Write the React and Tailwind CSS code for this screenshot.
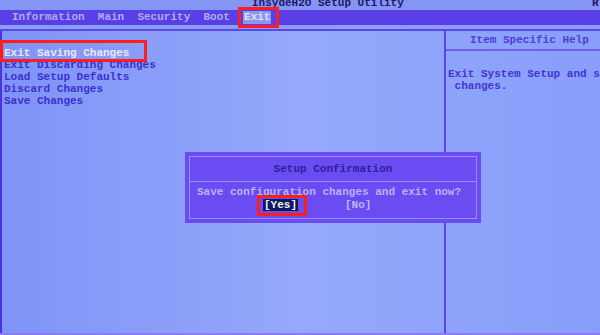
export default function App() {
  const mono = { fontFamily: '"Liberation Mono", "DejaVu Sans Mono", monospace' };
  return (
    <div
      className="relative w-[600px] h-[335px] overflow-hidden bg-gradient-to-r from-[#7f93f6] via-[#95a8fc] to-[#889efa] text-[11px] font-bold"
      style={mono}
    >
      {/* title strip */}
      <div className="h-[10px] bg-[#8595f4] relative overflow-hidden">
        <div className="absolute left-[252px] top-[-3px] leading-[12px] text-[#20186a] whitespace-pre">InsydeH2O Setup Utility</div>
        <div className="absolute left-[592px] top-[-3px] leading-[12px] text-[#20186a]">R</div>
      </div>
      {/* menu bar */}
      <div className="h-[15px] bg-[#5a3ee6] flex items-center">
        <div className="pl-[12px] leading-[15px] text-[#a6b0f2] whitespace-pre">Information  Main  Security  Boot  </div>
        <div className="leading-[13px] bg-[#8a98f4] text-[#dfe3ff] px-[1px] whitespace-pre">Exit</div>
      </div>
      {/* strip */}
      <div className="h-[4px] bg-[#8a9ef8]" />
      <div className="h-[2px] bg-[#5d48e4]" />
      {/* body */}
      <div className="flex h-[304px]">
        <div className="w-[444px] shrink-0 border-l-2 border-[#4a34e0] pl-[2px] pt-[16px] leading-[12px] text-[#3b2fd2] whitespace-pre">
          <div className="text-[#e6e9ff]">Exit Saving Changes</div>
          <div>Exit Discarding Changes</div>
          <div>Load Setup Defaults</div>
          <div>Discard Changes</div>
          <div>Save Changes</div>
        </div>
        <div className="w-[2px] shrink-0 bg-[#5a44e2]" />
        <div className="flex-1 min-w-0 overflow-hidden flex flex-col">
          <div className="h-[20px] flex items-center pl-[24px] text-[#4a3fd8] whitespace-pre border-b-2 border-[#6f62ea]">Item Specific Help</div>
          <div className="pt-[17px] pl-[2px] leading-[12px] text-[#4334d6] whitespace-pre">
            <div>Exit System Setup and save your</div>
            <div> changes.</div>
          </div>
        </div>
      </div>
      <div className="absolute left-0 right-0 bottom-0 h-[2px] bg-[#8c7cf4]" />

      {/* dialog */}
      <div className="absolute left-[185px] top-[152px] w-[296px] h-[71px] bg-[#6a4cf2] p-[4px]">
        <div className="w-full h-full border border-[#9c8cf6] flex flex-col">
          <div className="h-[25px] border-b border-[#9c8cf6] flex items-center justify-center text-[#2c1f9c]">Setup Confirmation</div>
          <div className="flex-1 flex flex-col pt-[4px] leading-[12px]">
            <div className="pl-[7px] text-[#b4b6f4] whitespace-pre">Save configuration changes and exit now?</div>
            <div className="flex gap-[47px] mt-[1px] ml-[73px] whitespace-pre">
              <span className="bg-[#101a58] text-[#f0f2ff] px-[1px]">[Yes]</span>
              <span className="text-[#b8baf6]">[No]</span>
            </div>
          </div>
        </div>
      </div>

      {/* red highlights */}
      <div className="absolute left-[238px] top-[7px] w-[41px] h-[21px] border-[3px] border-[#ff1e1e]" />
      <div className="absolute left-0 top-[40px] w-[147px] h-[22px] border-[3px] border-[#ff1e1e]" />
      <div className="absolute left-[257px] top-[195px] w-[50px] h-[21px] border-[3px] border-[#ff1e1e]" />
    </div>
  );
}
